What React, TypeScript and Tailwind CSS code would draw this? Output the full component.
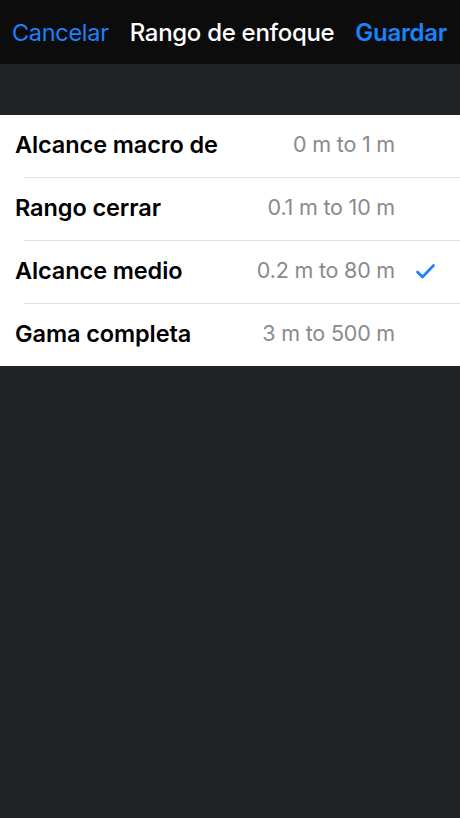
import React from 'react';

type Range = { label: string; value: string; selected?: boolean };

const ranges: Range[] = [
  { label: 'Alcance macro de', value: '0 m to 1 m' },
  { label: 'Rango cerrar', value: '0.1 m to 10 m' },
  { label: 'Alcance medio', value: '0.2 m to 80 m', selected: true },
  { label: 'Gama completa', value: '3 m to 500 m' },
];

const CheckIcon = () => (
  <svg width="19" height="15" viewBox="0 0 19 15" fill="none">
    <path d="M1.5 8 L6.5 13 L17.5 1.5" stroke="#1a82fb" strokeWidth="2.6" strokeLinecap="round" strokeLinejoin="round" />
  </svg>
);

export default function App() {
  return (
    <div
      className="w-[460px] h-[818px] bg-[#212226] flex flex-col"
      style={{ fontFamily: 'Inter, "Noto Sans", sans-serif' }}
    >
      <div className="h-[64px] bg-[#0c0c0d] flex items-center justify-between pl-[12px] pr-[13px] pt-[2px]">
        <span className="text-[23.5px] text-[#1a82fb] tracking-[-0.3px]">Cancelar</span>
        <span className="text-[24px] font-medium text-white tracking-[-0.3px]">Rango de enfoque</span>
        <span className="text-[24px] font-semibold text-[#1a82fb] tracking-[-0.3px]">Guardar</span>
      </div>
      <div className="h-[51px]" />
      <div className="bg-white">
        {ranges.map((r, i) => (
          <div key={r.label} className="flex flex-col">
            <div className="h-[62px] flex items-center pl-[15px] pb-[3px]">
              <span className="flex-1 text-[23.5px] font-semibold text-black tracking-[-0.1px]">{r.label}</span>
              <span className="text-[21.5px] text-[#8a8a8e] tracking-[-0.2px]">{r.value}</span>
              <div className="w-[65px] flex items-center pl-[21px] pt-[2px]">
                {r.selected && <CheckIcon />}
              </div>
            </div>
            {i < ranges.length - 1 && <div className="ml-[24px] h-px bg-[#e2e2e4]" />}
          </div>
        ))}
      </div>
    </div>
  );
}
